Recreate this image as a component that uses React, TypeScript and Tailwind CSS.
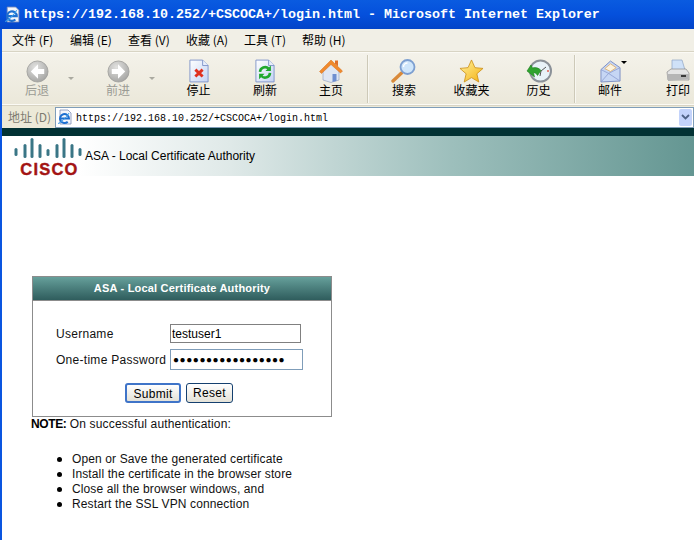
const cjk = "font-['Tahoma','Noto_Sans_CJK_SC',sans-serif]";

function IeIcon({ size = 16 }: { size?: number }) {
  return (
    <svg width={size} height={size} viewBox="0 0 16 16">
      <path d="M3 1h8l3 3v11H3z" fill="#f4f6fb" stroke="#7f8fb8" strokeWidth="0.8" />
      <path d="M3.500 9.500h8.500a4.500 4.500 0 1 0-1.300 3.200" fill="none" stroke="#1d6fd0" strokeWidth="2" />
      <path d="M1 14.500c2.500-.5 8-5.500 11-10.500" stroke="#3aa0ea" strokeWidth="1" fill="none" />
    </svg>
  );
}

function Arrow({ dir }: { dir: "left" | "right" }) {
  return (
    <svg width="23" height="23" viewBox="0 0 24 24">
      <defs>
        <radialGradient id={dir} cx="40%" cy="30%" r="75%">
          <stop offset="0%" stopColor="#e2e2e0" />
          <stop offset="100%" stopColor="#a3a3a1" />
        </radialGradient>
      </defs>
      <circle cx="12" cy="12" r="11" fill={`url(#${dir})`} stroke="#9a9a98" strokeWidth="0.8" />
      <path
        d={dir === "left" ? "M12.500 4.500 5 12l7.500 7.500v-5h6.500v-5h-6.500z" : "M11.500 4.500 19 12l-7.500 7.500v-5H5v-5h6.500z"}
        fill="#fff"
      />
    </svg>
  );
}

function Doc({ children }: { children: React.ReactNode }) {
  return (
    <svg width="20" height="24" viewBox="0 0 22 26">
      <defs>
        <linearGradient id="docfill" x1="0" y1="0" x2="1" y2="1">
          <stop offset="0%" stopColor="#ffffff" />
          <stop offset="100%" stopColor="#c3d3f4" />
        </linearGradient>
      </defs>
      <path d="M1 1h14l6 6v18H1z" fill="url(#docfill)" stroke="#7d92c8" />
      <path d="M15 1v6h6" fill="#e8eefb" stroke="#7d92c8" />
      {children}
    </svg>
  );
}

const toolbarIcons: Record<string, React.ReactNode> = {
  stop: (
    <Doc>
      <path d="M7 11.500 15 19M15 11.500 7 19" stroke="#e0301e" strokeWidth="3.200" />
    </Doc>
  ),
  refresh: (
    <Doc>
      <path d="M5.500 14a5.500 5.500 0 0 1 9.500-3.500M16.500 15a5.500 5.500 0 0 1-9.500 3.500" fill="none" stroke="#1fa82e" strokeWidth="2.800" />
      <path d="M17.500 7v6h-6zM4.500 22v-6h6z" fill="#1fa82e" />
    </Doc>
  ),
  home: (
    <svg width="24" height="24" viewBox="0 0 24 24">
      <path d="M4 11v10l8 2.500 8-2.500V11l-8-7z" fill="#dfe6f2" stroke="#8a9ac0" strokeWidth="0.6" />
      <path d="M13.500 15h4v7l-4 1z" fill="#6f8fd0" />
      <path d="M0.500 12.500 12 1l11.500 11-2 2L12 5.500 2.500 14.500z" fill="#f08a2c" stroke="#d46a18" strokeWidth="0.5" />
      <path d="M16 1.500h3v6l-3-3z" fill="#e0702a" />
    </svg>
  ),
  search: (
    <svg width="26" height="24" viewBox="0 0 26 24">
      <path d="M2 22 10.500 14" stroke="#d98a3a" strokeWidth="3.400" strokeLinecap="round" />
      <circle cx="16.500" cy="8" r="7" fill="#cfe6fb" stroke="#7d9fd0" strokeWidth="1.800" />
      <path d="M12.500 8a4 4 0 0 1 4-4" stroke="#fff" strokeWidth="1.400" fill="none" />
    </svg>
  ),
  favorites: (
    <svg width="25" height="24" viewBox="0 0 26 25">
      <defs>
        <linearGradient id="star" x1="0" y1="0" x2="1" y2="1">
          <stop offset="0%" stopColor="#fff3a0" />
          <stop offset="100%" stopColor="#f4b010" />
        </linearGradient>
      </defs>
      <path d="M13 1l3.600 8 8.400.8-6.400 5.600 2 8.600-7.600-4.600L5.400 24l2-8.600L1 9.800 9.400 9z" fill="url(#star)" stroke="#c98a10" strokeWidth="0.8" />
    </svg>
  ),
  history: (
    <svg width="26" height="24" viewBox="0 0 26 24">
      <circle cx="14.500" cy="12" r="10.500" fill="#e8f2f8" stroke="#8b9198" strokeWidth="2" />
      <path d="M15 12l5-4M15 12l-1 5" stroke="#555" strokeWidth="1" />
      <circle cx="22" cy="12" r="0.900" fill="#e05040" />
      <path d="M1 12l4-6 1.500 3c3.500-1 6.500 0 8.500 2.500l-3.500 5c-1-2-2.500-3-4-2.800L8.500 18z" fill="#2fa32f" stroke="#1d7d1d" strokeWidth="0.600" />
    </svg>
  ),
  mail: (
    <svg width="21" height="23" viewBox="0 0 22 24">
      <path d="M1 10 11 1l10 7v14L1 23z" fill="#c6d6f4" stroke="#7d8fc2" />
      <path d="M5 9l6-5 6 4-6 4z" fill="#fdf3dc" stroke="#dba963" strokeWidth="0.8" />
      <path d="M1 23l8-9 12 8M1 10l8 4 12-6" fill="none" stroke="#8a9bd0" strokeWidth="0.8" />
    </svg>
  ),
  print: (
    <svg width="24" height="24" viewBox="0 0 24 24">
      <path d="M6 1h10l3 10H6z" fill="#cfe1f8" stroke="#8ea3c4" strokeWidth="0.7" />
      <path d="M1 13l4-3h15l3 4v7H2z" fill="#e4e4e4" stroke="#8a8a8a" strokeWidth="0.7" />
      <path d="M1 15h22v5l-21 2z" fill="#b5b5b5" />
      <path d="M15 16h5v2h-5z" fill="#3a3a3a" />
    </svg>
  ),
};

const toolbar = [
  { key: "stop", label: "停止", w: "w-[67px]" },
  { key: "refresh", label: "刷新", w: "w-[66px]" },
  { key: "home", label: "主页", w: "w-[66px]" },
];
const toolbar2 = [
  { key: "search", label: "搜索", w: "w-[68px]" },
  { key: "favorites", label: "收藏夹", w: "w-[67px]" },
  { key: "history", label: "历史", w: "w-[67px]" },
];

function Tool({ icon, label, w, gray }: { icon: React.ReactNode; label: string; w: string; gray?: boolean }) {
  return (
    <div className={`flex shrink-0 flex-col items-center ${w}`}>
      <div className="flex h-[24px] items-end">{icon}</div>
      <span className={`mt-[-1px] text-[12px] leading-[16px] ${gray ? "text-[#9b9b94]" : "text-black"}`}>{label}</span>
    </div>
  );
}

function Caret() {
  return <span className="mt-[18px] ml-[-1px] h-0 w-0 shrink-0 border-x-[3px] border-t-[3px] border-x-transparent border-t-[#aaa9a0]" />;
}

function Separator() {
  return <div className="mt-[-4px] h-[48px] w-[2px] shrink-0 border-l border-[#cdc9b8] bg-[#f8f7f1]" />;
}

const logoBars = [
  { x: 16, top: 11, bottom: 19 },
  { x: 25, top: 7, bottom: 21 },
  { x: 32, top: 1, bottom: 21 },
  { x: 40, top: 7, bottom: 21 },
  { x: 48, top: 12, bottom: 19 },
  { x: 57, top: 7, bottom: 21 },
  { x: 64, top: 1, bottom: 21 },
  { x: 72, top: 7, bottom: 21 },
  { x: 80, top: 11, bottom: 19 },
];

function CiscoLogo() {
  return (
    <div className="flex w-[70px] flex-col items-center">
      <svg width="70" height="22" viewBox="14 0 70 22">
        {logoBars.map((b) => (
          <rect key={b.x} x={b.x - 1.5} y={b.top} width="3" height={b.bottom - b.top} rx="1.500" fill="#3a7686" />
        ))}
      </svg>
      <span className="mt-[3px] ml-[1px] font-['Liberation_Sans',sans-serif] text-[16.500px] leading-[14px] font-bold tracking-[1.200px] text-[#a31414] [-webkit-text-stroke:0.4px_#a31414]">CISCO</span>
    </div>
  );
}

const steps = [
  "Open or Save the generated certificate",
  "Install the certificate in the browser store",
  "Close all the browser windows, and",
  "Restart the SSL VPN connection",
];

export default function App() {
  return (
    <div className={`h-[540px] w-[694px] overflow-hidden bg-white ${cjk}`}>
      {/* title bar */}
      <div className="flex h-[29px] items-center bg-gradient-to-b from-[#0a5be0] via-[#0550dc] to-[#0344c8] pl-[4px]">
        <IeIcon size={17} />
        <span className="ml-[3px] pt-[1px] font-['Liberation_Mono',monospace] text-[13.330px] font-bold whitespace-pre text-white">
          https://192.168.10.252/+CSCOCA+/login.html - Microsoft Internet Explorer
        </span>
      </div>

      <div className="border-l-2 border-[#0a55e0] bg-[#ece9d8]">
        {/* menu bar */}
        <div className="flex h-[23px] items-center gap-[18px] border-b border-[#d8d4c4] bg-[#f1efe6] pl-[10px] text-[12px] text-black">
          {["文件 (F)", "编辑 (E)", "查看 (V)", "收藏 (A)", "工具 (T)", "帮助 (H)"].map((m) => (
            <span key={m} className="w-[40px] whitespace-nowrap">{m}</span>
          ))}
        </div>

        {/* toolbar */}
        <div className="flex h-[53px] items-start overflow-hidden border-y border-[#fbfaf5] bg-gradient-to-b from-[#f4f2ea] to-[#ebe8da] pt-[6px] pl-[3px]">
          <Tool icon={<Arrow dir="left" />} label="后退" w="w-[64px]" gray />
          <Caret />
          <div className="w-[12px] shrink-0" />
          <Tool icon={<Arrow dir="right" />} label="前进" w="w-[64px]" gray />
          <Caret />
          <div className="w-[10px] shrink-0" />
          {toolbar.map((t) => (
            <Tool key={t.key} icon={toolbarIcons[t.key]} label={t.label} w={t.w} />
          ))}
          <div className="w-[3px] shrink-0" />
          <Separator />
          <div className="w-[1px] shrink-0" />
          {toolbar2.map((t) => (
            <Tool key={t.key} icon={toolbarIcons[t.key]} label={t.label} w={t.w} />
          ))}
          <div className="w-[2px] shrink-0" />
          <Separator />
          <div className="w-[1px] shrink-0" />
          <div className="relative">
            <Tool icon={toolbarIcons.mail} label="邮件" w="w-[66px]" />
            <span className="absolute top-[2px] left-[44px] h-0 w-0 border-x-[3px] border-t-[3px] border-x-transparent border-t-black" />
          </div>
          <Tool icon={toolbarIcons.print} label="打印" w="w-[70px]" />
        </div>

        {/* address bar */}
        <div className="flex h-[23px] items-center border-t border-[#d8d4c4] bg-[#ece9d8] pl-[6px]">
          <span className="w-[46px] text-[12px] whitespace-nowrap text-[#7d7b70]">地址 (D)</span>
          <div className="ml-[1px] flex h-[21px] min-w-0 flex-1 items-center border border-[#7f9db9] bg-white pl-[1px]">
            <IeIcon size={16} />
            <span className="ml-[3px] pt-[2px] font-['Liberation_Mono',monospace] text-[10px] whitespace-pre text-black">
              https://192.168.10.252/+CSCOCA+/login.html
            </span>
            <span className="mr-[1px] ml-auto flex h-[17px] w-[13px] items-center justify-center rounded-[2px] bg-[#c3d3fb]">
              <svg width="9" height="6" viewBox="0 0 9 6">
                <path d="M1 1l3.500 3.500L8 1" fill="none" stroke="#4d6185" strokeWidth="1.800" />
              </svg>
            </span>
          </div>
        </div>
      </div>

      {/* page */}
      <div className="h-[412px] border-l-2 border-[#0a55e0] bg-white font-['Liberation_Sans',sans-serif]">
        <div className="h-[8px] bg-[#023234]" />
        <div className="flex h-[40px] items-center bg-[linear-gradient(90deg,#ffffff_11%,#dfe9e8_33%,#9dbfbc_65%,#649692_100%)] pl-[12px]">
          <CiscoLogo />
          <span className="ml-[1px] text-[12px] leading-none text-black">ASA - Local Certificate Authority</span>
        </div>

        <div className="mt-[100px] ml-[30px] h-[141px] w-[300px] border border-[#8c8c8c]">
          <div className="flex h-[24px] items-center justify-center border-b border-[#8c8c8c] bg-gradient-to-b from-[#66a09b] to-[#2f5d5d] text-[11px] font-bold tracking-[0.200px] text-white">
            ASA - Local Certificate Authority
          </div>
          <div className="flex items-center pt-[23px] pl-[23px]">
            <span className="w-[114px] text-[12px] tracking-[0.280px] text-[#111]">Username</span>
            <input
              readOnly
              value="testuser1"
              className="h-[19px] w-[131px] border border-[#808080] bg-white pl-[1px] font-['Liberation_Sans',sans-serif] text-[12px] text-black outline-none"
            />
          </div>
          <div className="flex items-center pt-[6px] pl-[23px]">
            <span className="w-[114px] text-[12px] tracking-[0.280px] whitespace-nowrap text-[#111]">One-time Password</span>
            <span className="flex h-[21px] w-[133px] items-center overflow-hidden border border-[#7f9db9] bg-white pl-[2px] text-[10px] leading-none tracking-[0.560px] text-black">
              ●●●●●●●●●●●●●●●●●
            </span>
          </div>
          <div className="flex gap-[5px] pt-[13px] pl-[92px]">
            <button className="h-[20px] w-[56px] rounded-[3px] border-2 border-[#3f74c8] bg-gradient-to-b from-white to-[#e4e2d8] text-[12px] tracking-[0.300px] text-black">Submit</button>
            <button className="h-[20px] w-[47px] rounded-[3px] border border-[#15406f] bg-gradient-to-b from-white to-[#e4e2d8] text-[12px] tracking-[0.300px] text-black">Reset</button>
          </div>
        </div>

        <p className="ml-[29px] text-[12px] leading-[15px] tracking-[0.150px] text-[#111]">
          <span className="font-bold tracking-[-0.400px] text-black">NOTE:</span> On successful authentication:
        </p>
        <ul className="mt-[20px] ml-[55px] text-[12px] leading-[15px] tracking-[0.120px] text-[#111]">
          {steps.map((s) => (
            <li key={s} className="flex items-center">
              <span className="h-[5px] w-[5px] rounded-full bg-black" />
              <span className="ml-[10px]">{s}</span>
            </li>
          ))}
        </ul>
      </div>
    </div>
  );
}
